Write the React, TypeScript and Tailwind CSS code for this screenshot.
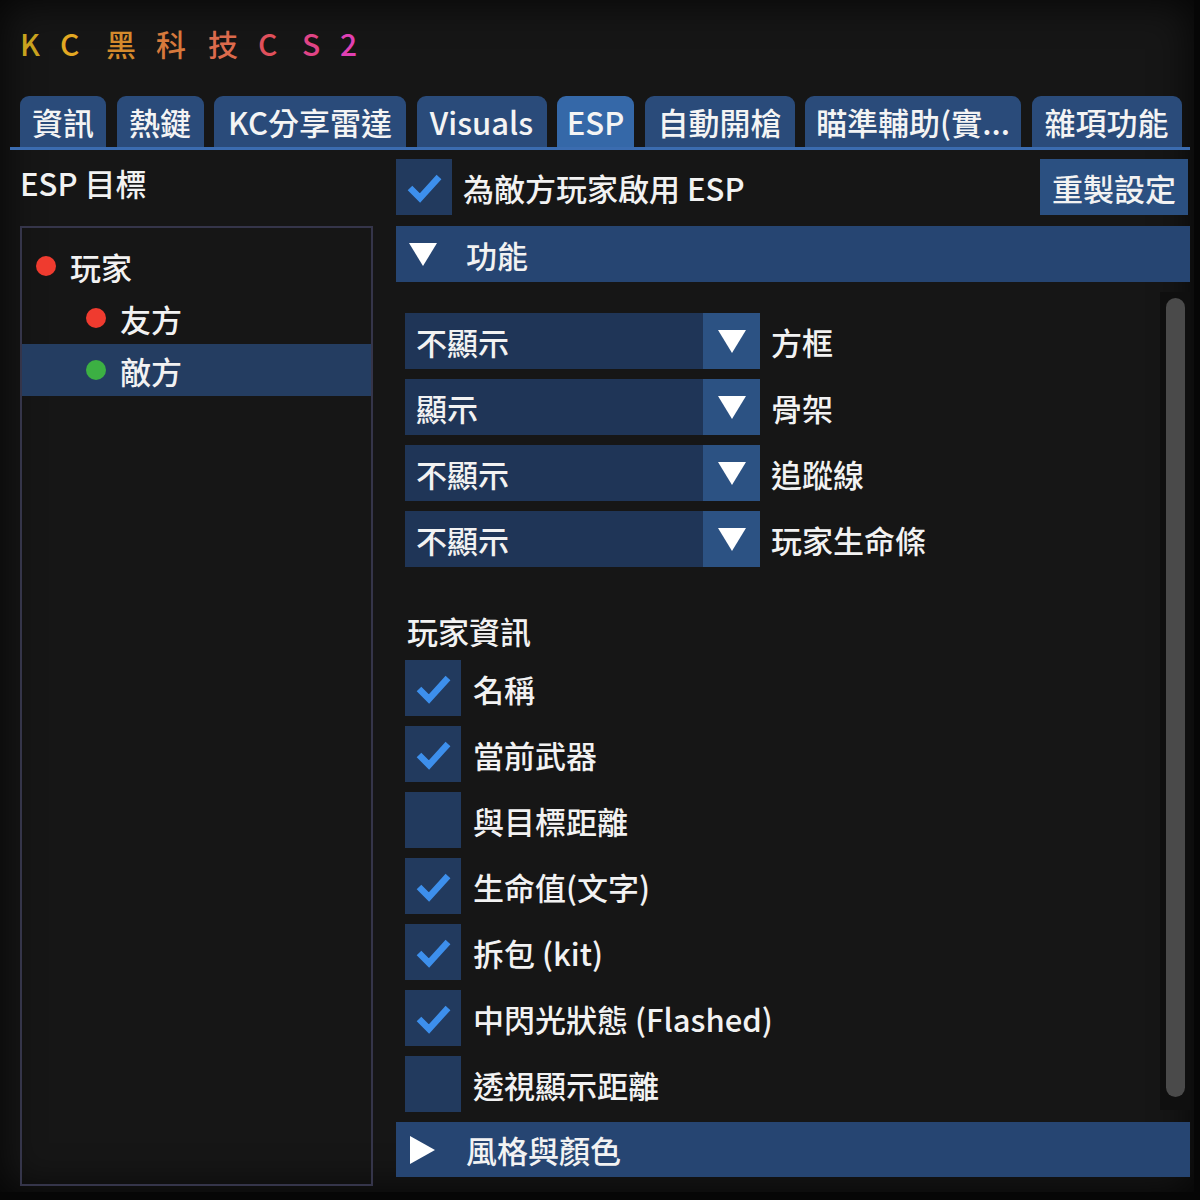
import React from "react";

const FONT = { fontFamily: '"Noto Sans CJK TC", "Noto Sans", sans-serif' };

function Check() {
  return (
    <svg width="56" height="56" viewBox="0 0 56 56">
      <polyline points="14,29 24,39 43,18" fill="none" stroke="#3d8fec" strokeWidth="6.5" strokeLinecap="butt" strokeLinejoin="miter" />
    </svg>
  );
}

function CheckBox({ checked, label }: { checked: boolean; label: string }) {
  return (
    <div className="flex items-center h-[56px]">
      <div className="w-[56px] h-[56px] bg-[#223a5e] flex items-center justify-center shrink-0">
        {checked && <Check />}
      </div>
      <span className="ml-[12px] text-[31px] font-medium leading-none text-[#f2f2f2]">{label}</span>
    </div>
  );
}

function TriDown() {
  return (
    <svg width="30" height="26" viewBox="0 0 30 26">
      <polygon points="1,2 29,2 15,25" fill="#ffffff" />
    </svg>
  );
}

function TriRight() {
  return (
    <svg width="28" height="30" viewBox="0 0 28 30">
      <polygon points="2,1 27,15 2,29" fill="#ffffff" />
    </svg>
  );
}

function Combo({ value, label }: { value: string; label: string }) {
  return (
    <div className="flex items-center h-[56px]">
      <div className="w-[298px] h-[56px] bg-[#1f3557] flex items-center pl-[11px] text-[31px] font-medium leading-none text-[#f2f2f2]">
        {value}
      </div>
      <div className="w-[57px] h-[56px] bg-[#2c5283] flex items-center justify-center">
        <TriDown />
      </div>
      <span className="ml-[11px] text-[31px] font-medium leading-none text-[#f2f2f2]">{label}</span>
    </div>
  );
}

const tabs: { t: string; w: string; active?: boolean }[] = [
  { t: "資訊", w: "w-[86px]" },
  { t: "熱鍵", w: "w-[87px]" },
  { t: "KC分享雷達", w: "w-[192px]" },
  { t: "Visuals", w: "w-[130px]" },
  { t: "ESP", w: "w-[77px]", active: true },
  { t: "自動開槍", w: "w-[150px]" },
  { t: "瞄準輔助(實...", w: "w-[216px]" },
  { t: "雜項功能", w: "w-[150px]" },
];

const titleChars: { c: string; color: string; w: string }[] = [
  { c: "K", color: "#c9a21e", w: "w-[40px]" },
  { c: "C", color: "#e2a822", w: "w-[46px]" },
  { c: "黑", color: "#d48a2c", w: "w-[50px]" },
  { c: "科", color: "#d6793c", w: "w-[52px]" },
  { c: "技", color: "#dc6a4c", w: "w-[50px]" },
  { c: "C", color: "#e0505c", w: "w-[44px]" },
  { c: "S", color: "#e04486", w: "w-[38px]" },
  { c: "2", color: "#e040b4", w: "w-[30px]" },
];

export default function App() {
  return (
    <div className="w-[1200px] h-[1200px] bg-[#060606] overflow-hidden" style={FONT}>
      <div className="w-[1194px] h-[1192px] bg-[#161616] shadow-[inset_0_0_40px_rgba(0,0,0,0.85)] flex flex-col">
        {/* title */}
        <div className="h-[86px] flex items-center pl-[20px]">
          {titleChars.map((t, i) => (
            <span key={i} className={`${t.w} text-[30px] font-medium leading-none`} style={{ color: t.color }}>
              {t.c}
            </span>
          ))}
        </div>
        {/* tabs */}
        <div className="mt-[10px] flex pl-[20px] gap-[10.5px] h-[51px]">
          {tabs.map((t, i) => (
            <div
              key={i}
              className={`${t.w} h-[51px] rounded-t-[9px] flex items-center justify-center text-[31px] font-medium leading-none text-[#f4f4f4] whitespace-nowrap ${
                t.active ? "bg-[#3568a8]" : "bg-[#2a4b7a]"
              }`}
            >
              {t.t}
            </div>
          ))}
        </div>
        <div className="mx-[10px] w-[1180px] h-[3px] bg-[#3b6cb0]" />
        {/* body */}
        <div className="flex">
          {/* left column */}
          <div className="ml-[20px] w-[353px] flex flex-col">
            <div className="h-[64px] flex items-center text-[31px] font-medium leading-none text-[#f2f2f2]">ESP 目標</div>
            <div className="mt-[12px] h-[960px] border-2 border-[#35354a] pt-[12px]">
              <div className="h-[52px] flex items-center pl-[14px]">
                <span className="w-[20px] h-[20px] rounded-full bg-[#ef3b2f]" />
                <span className="ml-[14px] text-[31px] font-medium leading-none text-[#f2f2f2]">玩家</span>
              </div>
              <div className="h-[52px] flex items-center pl-[64px]">
                <span className="w-[20px] h-[20px] rounded-full bg-[#ef3b2f]" />
                <span className="ml-[14px] text-[31px] font-medium leading-none text-[#f2f2f2]">友方</span>
              </div>
              <div className="h-[52px] flex items-center pl-[64px] bg-[#243d61]">
                <span className="w-[20px] h-[20px] rounded-full bg-[#3cb043]" />
                <span className="ml-[14px] text-[31px] font-medium leading-none text-[#f2f2f2]">敵方</span>
              </div>
            </div>
          </div>
          {/* right column */}
          <div className="ml-[23px] w-[794px] flex flex-col pt-[9px]">
            <div className="flex items-center justify-between h-[56px]">
              <div className="flex items-center">
                <div className="w-[56px] h-[56px] bg-[#223a5e] flex items-center justify-center">
                  <Check />
                </div>
                <span className="ml-[11px] text-[31px] font-medium leading-none text-[#f2f2f2]">為敵方玩家啟用 ESP</span>
              </div>
              <div className="mr-[2px] w-[148px] h-[56px] bg-[#2b5081] flex items-center justify-center text-[31px] font-medium leading-none text-[#f2f2f2]">
                重製設定
              </div>
            </div>
            <div className="mt-[11px] h-[56px] bg-[#264572] flex items-center pl-[12px]">
              <TriDown />
              <span className="ml-[28px] text-[31px] font-medium leading-none text-[#f2f2f2]">功能</span>
            </div>
            {/* child area */}
            <div className="mt-[10px] h-[818px] flex">
              <div className="flex-1 pl-[9px] pt-[21px] flex flex-col">
                <div className="flex flex-col gap-[10px]">
                  <Combo value="不顯示" label="方框" />
                  <Combo value="顯示" label="骨架" />
                  <Combo value="不顯示" label="追蹤線" />
                  <Combo value="不顯示" label="玩家生命條" />
                </div>
                <div className="mt-[48px] h-[40px] flex items-center text-[31px] font-medium leading-none text-[#f2f2f2] pl-[2px]">玩家資訊</div>
                <div className="mt-[14px] flex flex-col gap-[10px]">
                  <CheckBox checked label="名稱" />
                  <CheckBox checked label="當前武器" />
                  <CheckBox checked={false} label="與目標距離" />
                  <CheckBox checked label="生命值(文字)" />
                  <CheckBox checked label="拆包 (kit)" />
                  <CheckBox checked label="中閃光狀態 (Flashed)" />
                  <CheckBox checked={false} label="透視顯示距離" />
                </div>
              </div>
              <div className="w-[30px] h-[818px] bg-[#0f0f0f] pt-[6px] pb-[13px] flex justify-center">
                <div className="w-[19px] h-full rounded-full bg-[#4a4a4a]" />
              </div>
            </div>
            <div className="mt-[12px] h-[55px] bg-[#264572] flex items-center pl-[12px]">
              <TriRight />
              <span className="ml-[30px] text-[31px] font-medium leading-none text-[#f2f2f2]">風格與顏色</span>
            </div>
          </div>
        </div>
      </div>
    </div>
  );
}
